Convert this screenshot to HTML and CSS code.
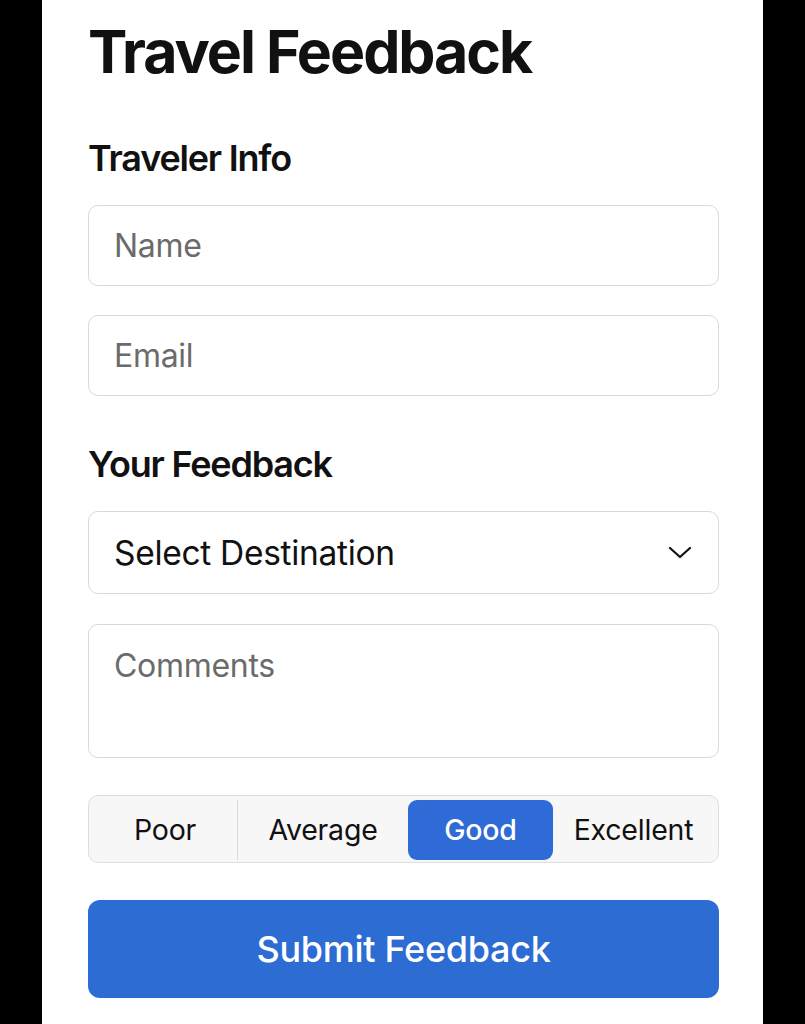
FILE: index.html
```html
<!DOCTYPE html>
<html>
<head>
<meta charset="utf-8">
<link rel="stylesheet" href="styles.css">
</head>
<body>
<main class="panel">
  <h1 class="title">Travel Feedback</h1>
  <h2 class="section">Traveler Info</h2>
  <div class="field"><span class="placeholder">Name</span></div>
  <div class="field gap"><span class="placeholder">Email</span></div>
  <h2 class="section second">Your Feedback</h2>
  <div class="field select"><span class="value">Select Destination</span>
    <svg class="chev" width="24" height="14" viewBox="0 0 24 14"><path d="M2 2 L12 11 L22 2" fill="none" stroke="#111" stroke-width="2.2" stroke-linecap="round" stroke-linejoin="round"/></svg>
  </div>
  <div class="field comments"><span class="placeholder">Comments</span></div>
  <div class="rating">
    <div class="seg divider">Poor</div>
    <div class="seg">Average</div>
    <div class="seg active">Good</div>
    <div class="seg">Excellent</div>
  </div>
  <button class="submit">Submit Feedback</button>
</main>
</body>
</html>
```
FILE: styles.css
```css
html, body {
  margin: 0;
  padding: 0;
  background: #000;
  height: 1024px;
  overflow: hidden;
}
body {
  font-family: Inter, "Liberation Sans", sans-serif;
  color: #111;
}
.panel {
  width: 721px;
  margin-left: 42px;
  box-sizing: border-box;
  padding: 17.5px 44px 40px 46px;
  background: #fff;
  height: 1024px;
}
.title {
  margin: 0;
  font-size: 59px;
  font-weight: 700;
  letter-spacing: -2px;
  line-height: 68px;
  height: 68px;
}
.section {
  margin: 50.5px 0 25px;
  font-size: 36px;
  font-weight: 600;
  letter-spacing: -1.2px;
  line-height: 44px;
  height: 44px;
}
.section.second {
  margin-top: 46px;
}
.field {
  height: 81px;
  box-sizing: border-box;
  border: 1.5px solid #d9d9d9;
  border-radius: 10px;
  display: flex;
  align-items: center;
  padding: 0 24px 0 25px;
  font-size: 32px;
  letter-spacing: -0.3px;
}
.field.gap {
  margin-top: 29px;
}
.placeholder {
  color: #6b6b6b;
}
.select {
  height: 83px;
  justify-content: space-between;
  font-size: 33.5px;
}
.value {
  color: #111;
}
.chev {
  margin-right: 2px;
}
.comments {
  height: 134px;
  align-items: flex-start;
  padding-top: 21px;
  margin-top: 30px;
}
.rating {
  margin-top: 37px;
  height: 68px;
  box-sizing: border-box;
  border: 1.5px solid #dedede;
  border-radius: 10px;
  background: #f7f7f7;
  display: grid;
  grid-template-columns: 145px 170px 145px 1fr;
  padding: 3.5px 4px 2.5px;
}
.seg {
  display: flex;
  align-items: center;
  justify-content: center;
  font-size: 28.5px;
  letter-spacing: -0.2px;
  color: #111;
  border-radius: 9px;
}
.seg.divider {
  border-radius: 0;
  border-right: 1.5px solid #dadada;
}
.seg.active {
  background: #2e6bd6;
  color: #fff;
  font-weight: 500;
}
.submit {
  display: block;
  width: 100%;
  margin-top: 37px;
  height: 98px;
  border: none;
  border-radius: 12px;
  background: #2d6cd3;
  color: #fff;
  font-family: Inter, "Liberation Sans", sans-serif;
  font-size: 36px;
  font-weight: 500;
  letter-spacing: -0.3px;
}
```
